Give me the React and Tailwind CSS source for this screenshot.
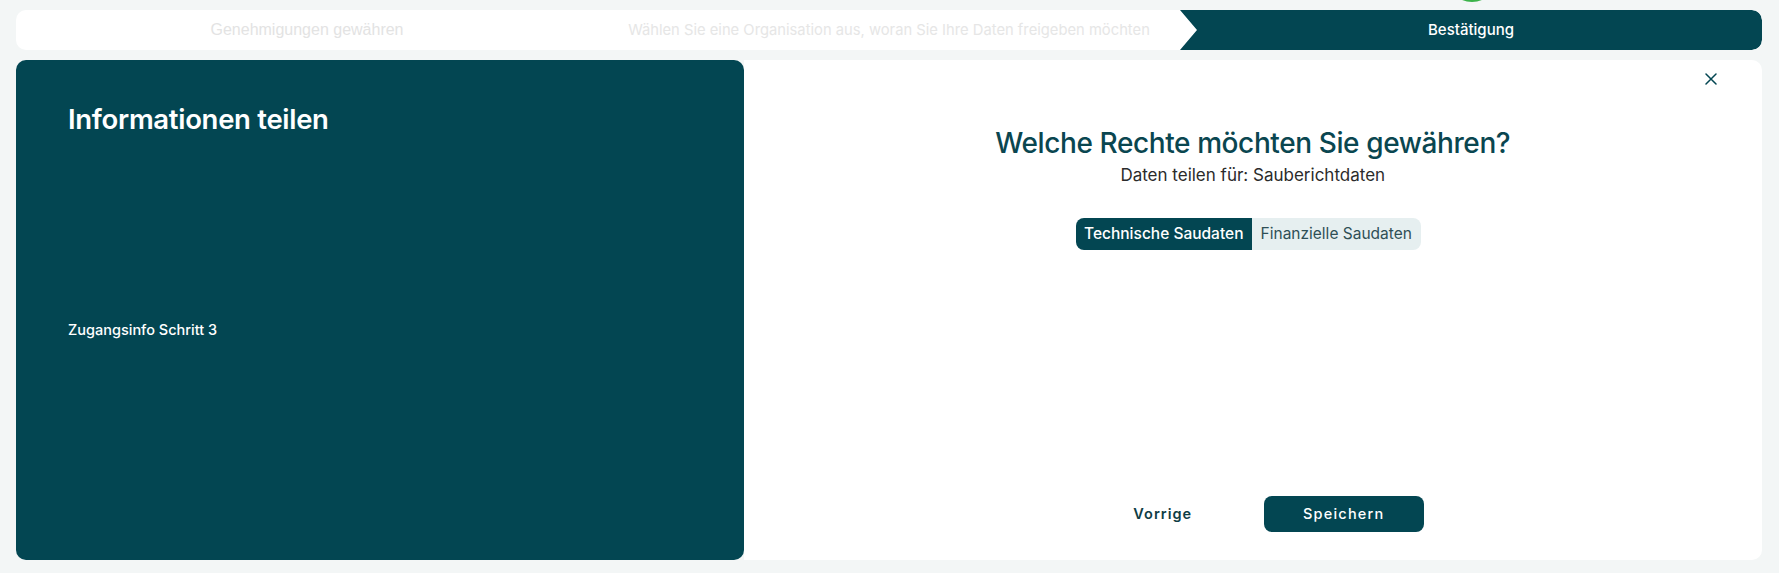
import React from "react";

const teal = "#034652";

export default function App() {
  return (
    <div className="relative w-full h-[573px] bg-[#f3f6f6] overflow-hidden pl-[16px] pr-[17px] pt-[10px] font-['Inter',sans-serif]">
      {/* green marker peeking from the top */}
      <div className="absolute left-[1446px] top-[-58px] w-[52px] h-[60px] rounded-full bg-[#3bb34a]" />

      {/* stepper */}
      <div className="flex h-[40px] bg-white rounded-[10px] overflow-hidden">
        <div className="flex-1 flex items-center justify-center text-[16px] text-[#e3e3e3] font-['Liberation_Sans',sans-serif]">
          Genehmigungen gewähren
        </div>
        <div className="flex-1 flex items-center justify-center text-[14.75px] text-[#e6e6e6]">
          Wählen Sie eine Organisation aus, woran Sie Ihre Daten freigeben möchten
        </div>
        <div className="flex-1 flex items-center justify-center bg-[#034652] text-white text-[15px] font-medium rounded-r-[10px] [clip-path:polygon(17px_50%,0_0,100%_0,100%_100%,0_100%)]">
          Bestätigung
        </div>
      </div>

      {/* main */}
      <div className="grid grid-cols-12 h-[500px] mt-[10px]">
        <div className="col-span-5 bg-[#034652] rounded-[10px] pl-[52px] pt-[40px] text-white">
          <h1 className="text-[27.5px] leading-[38px] font-semibold tracking-[-0.3px]">Informationen teilen</h1>
          <p className="mt-[181px] text-[14.5px] font-medium">Zugangsinfo Schritt 3</p>
        </div>

        <div className="col-span-7 bg-white rounded-r-[10px] flex flex-col items-center">
          <div className="w-full flex justify-end pr-[45px] pt-[7px] h-[34px]">
            <svg width="12" height="12" viewBox="0 0 12 12" className="mt-[6px]">
              <path d="M1 1 L11 11 M11 1 L1 11" stroke={teal} strokeWidth="1.5" strokeLinecap="round" />
            </svg>
          </div>
          <h2 className="mt-[29px] text-[28px] leading-[40px] font-medium text-[#0a4650] tracking-[-0.4px]">
            Welche Rechte möchten Sie gewähren?
          </h2>
          <p className="mt-[0px] text-[17px] leading-[24px] text-[#2b2b2b]">Daten teilen für: Sauberichtdaten</p>

          <div className="mt-[31px] mr-[9px] flex h-[32px] rounded-[8px] overflow-hidden text-[15.5px]">
            <div className="w-[176px] bg-[#034652] text-white font-medium flex items-center justify-center">
              Technische Saudaten
            </div>
            <div className="w-[169px] bg-[#e6eff0] text-[#2f4f56] flex items-center justify-center">
              Finanzielle Saudaten
            </div>
          </div>

          <div className="flex-1" />

          <div className="flex gap-[21px] mb-[28px] ml-[1px]">
            <button className="w-[160px] h-[36px] text-[14.5px] font-semibold tracking-[1px] text-[#0f3d45]">Vorrige</button>
            <button className="w-[160px] h-[36px] rounded-[8px] bg-[#034652] text-white text-[14.5px] font-medium tracking-[1.2px]">
              Speichern
            </button>
          </div>
        </div>
      </div>
    </div>
  );
}
